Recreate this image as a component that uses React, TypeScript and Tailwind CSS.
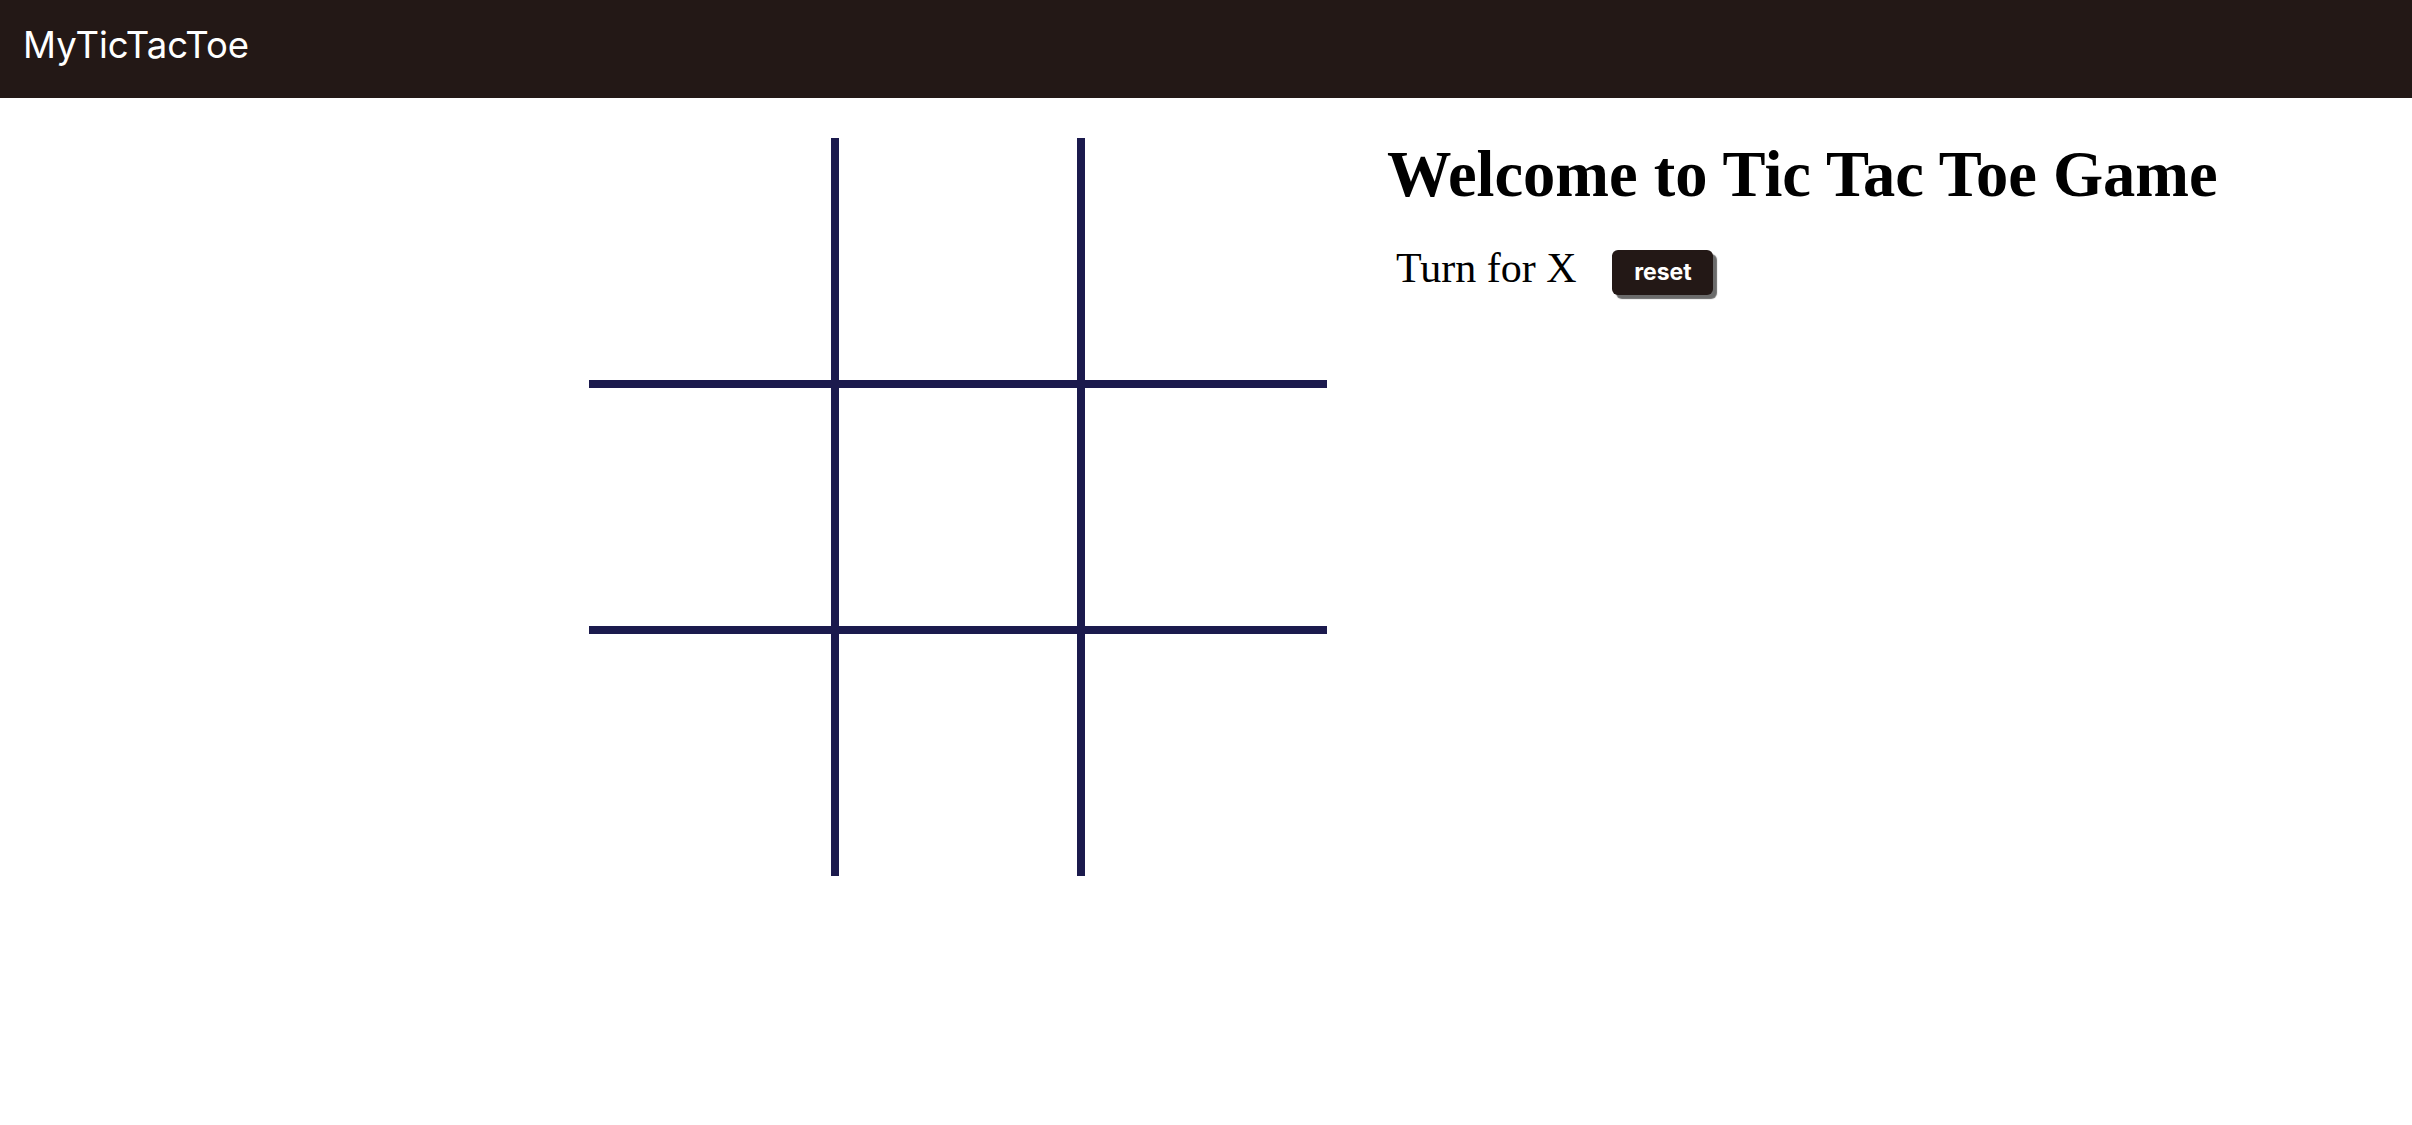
const cellBorders = [
  "border-r-4 border-b-4",
  "border-l-4 border-r-4 border-b-4",
  "border-l-4 border-b-4",
  "border-t-4 border-r-4 border-b-4",
  "border-4",
  "border-t-4 border-l-4 border-b-4",
  "border-t-4 border-r-4",
  "border-t-4 border-l-4 border-r-4",
  "border-t-4 border-l-4",
];

const Board = () => {
  return (
    <div className="grid grid-cols-3 w-[738px] h-[738px] shrink-0">
      {cellBorders.map((b, i) => (
        <div key={i} className={`${b} border-[#1b1a4d] w-[246px] h-[246px]`} />
      ))}
    </div>
  );
};

export default function App() {
  return (
    <div className="min-h-screen bg-white">
      <header className="h-[98px] bg-[#231816] flex items-center px-[23px] pb-[8px]">
        <span className="text-white text-[36.5px] font-['Inter',sans-serif]">MyTicTacToe</span>
      </header>

      <main className="flex items-start pl-[589px] pt-[40px] gap-[60px]">
        <Board />
        <div className="text-black font-['Liberation_Serif',serif]">
          <h1 className="text-[64.5px] font-bold leading-none mt-[5px] whitespace-nowrap">
            Welcome to Tic Tac Toe Game
          </h1>
          <div className="flex items-start mt-[39px] pl-[9px]">
            <p className="text-[42px] leading-none">Turn for X</p>
            <button className="ml-[36px] mt-[3px] w-[101px] h-[45px] rounded-[6px] bg-[#231816] text-white text-[23px] font-bold font-['Inter',sans-serif] shadow-[4px_4px_1px_#6b6b6b]">
              reset
            </button>
          </div>
        </div>
      </main>
    </div>
  );
}
